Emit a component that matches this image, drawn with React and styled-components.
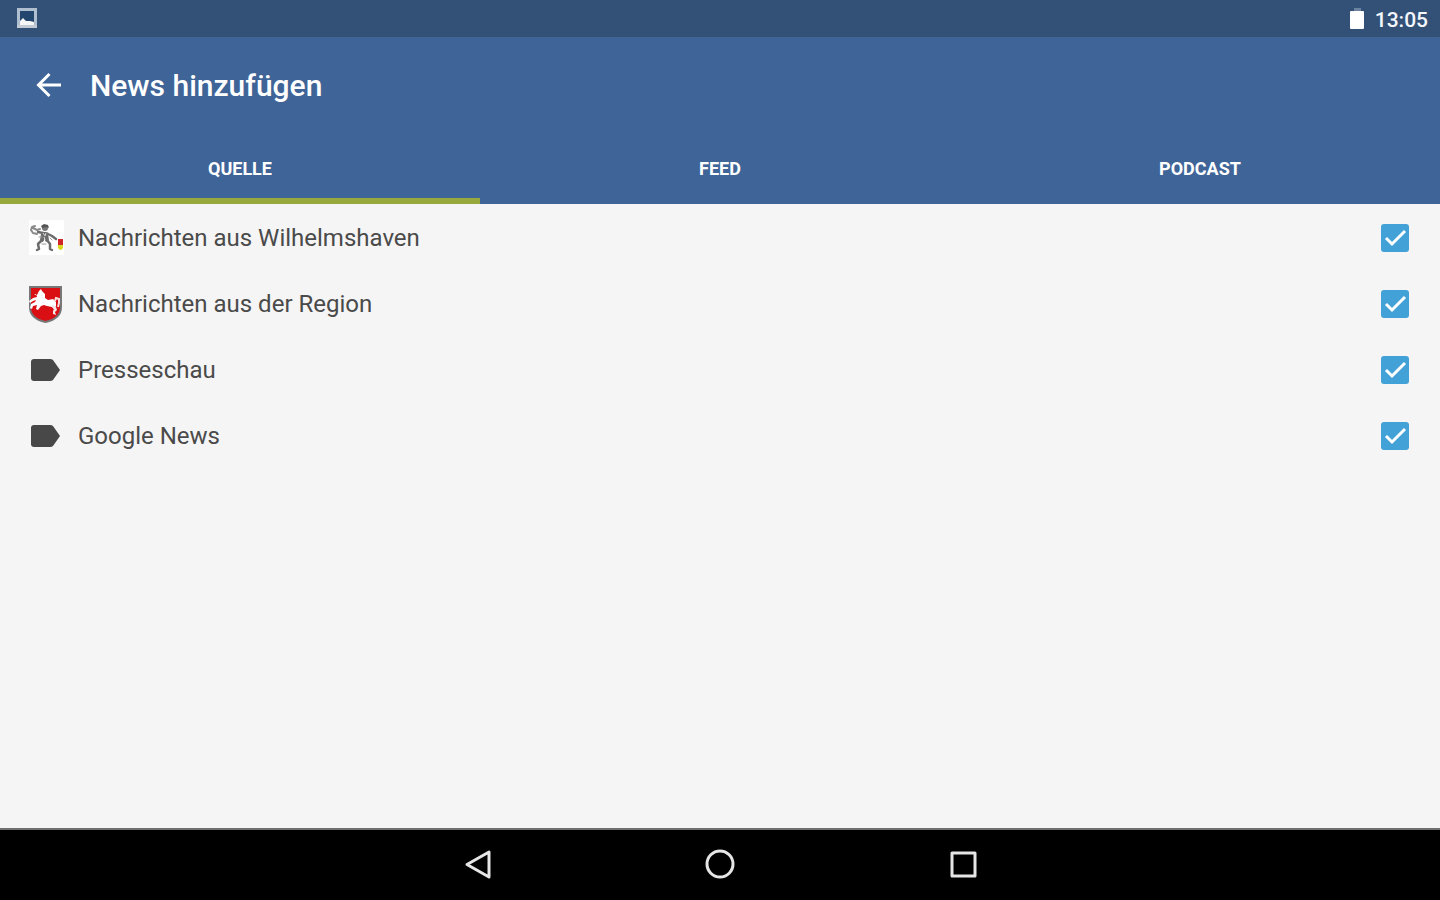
import React, { useState } from "react";
import styled, { createGlobalStyle } from "styled-components";

const GlobalStyle = createGlobalStyle`
  *, *::before, *::after { box-sizing: border-box; }
  body {
    margin: 0;
    background: #f5f5f5;
    color: #4a4a4a;
    font-family: Roboto, "Liberation Sans", sans-serif;
  }
  button, input { font: inherit; }
`;

const Screen = styled.div`
  display: flex;
  flex-direction: column;
  min-height: 100vh;
`;

const StatusBar = styled.div`
  display: flex;
  align-items: center;
  justify-content: space-between;
  height: 37px;
  padding: 0 12px 0 16px;
  background: #335076;
  color: #f4f7fb;
`;

const StatusGroup = styled.div`
  display: flex;
  align-items: center;
  gap: 10px;
`;

const Clock = styled.time`
  font-size: 21px;
  font-weight: 500;
  line-height: 24px;
  padding-top: 2px;
`;

const Header = styled.header`
  background: #3f6497;
  color: #fff;
`;

const Toolbar = styled.div`
  display: flex;
  align-items: center;
  gap: 24px;
  height: 97px;
  padding: 0 32px;
`;

const IconButton = styled.button`
  display: flex;
  align-items: center;
  justify-content: center;
  width: ${({ $width }) => $width}px;
  height: 48px;
  padding: 0;
  border: 0;
  background: none;
  color: inherit;
  cursor: pointer;
`;

const Title = styled.h1`
  margin: 0;
  font-size: 30px;
  font-weight: 500;
  line-height: 36px;
`;

const Tabs = styled.div`
  display: grid;
  grid-template-columns: repeat(3, 1fr);
`;

const Tab = styled.button`
  height: 70px;
  padding: 6px 0 0;
  border: 0;
  border-bottom: 6px solid ${({ $active }) => ($active ? "#97a83c" : "transparent")};
  background: none;
  color: #fff;
  font-size: 18px;
  font-weight: 700;
  line-height: 24px;
  cursor: pointer;
`;

const Content = styled.main`
  flex: 1;
  padding-top: 1px;
`;

const List = styled.ul`
  margin: 0;
  padding: 0;
  list-style: none;
`;

const Row = styled.label`
  display: flex;
  align-items: center;
  gap: 14px;
  height: 66px;
  padding: 0 31px 0 28px;
  cursor: pointer;
`;

const RowIcon = styled.span`
  display: flex;
  width: 36px;
`;

const RowText = styled.span`
  flex: 1;
  font-size: 24px;
  line-height: 32px;
`;

const CheckHolder = styled.span`
  display: grid;
  width: 28px;
  height: 28px;
  > * { grid-area: 1 / 1; }
  svg { pointer-events: none; z-index: 1; }
`;

const Checkbox = styled.input`
  appearance: none;
  width: 28px;
  height: 28px;
  margin: 0;
  border: 3px solid #8a8a8a;
  border-radius: 3px;
  cursor: pointer;
  &:checked {
    border-color: #42a1d6;
    background: #42a1d6;
  }
`;

const NavBar = styled.nav`
  display: flex;
  justify-content: center;
  align-items: center;
  height: 72px;
  border-top: 2px solid #6f7170;
  background: #000;
  color: #e6e6e6;
`;

function PictureIcon() {
  return (
    <svg width="22" height="22" viewBox="0 0 22 22" aria-hidden="true">
      <rect x="2.500" y="1.500" width="17" height="17" fill="#23466f" stroke="#b0bfd0" strokeWidth="3" />
      <path d="M4 17v-4l3-3 3 3h4l4 1v3z" fill="#f6f6f6" />
      <path d="M1 17h20v3H1z" fill="#c3cad3" />
    </svg>
  );
}

function BatteryIcon() {
  return (
    <svg width="16" height="22" viewBox="0 0 16 22" aria-hidden="true">
      <rect x="5" y="0" width="7" height="4" fill="#6c829e" />
      <rect x="1" y="3" width="14" height="18" rx="1" fill="#fff" />
    </svg>
  );
}

function BackArrow() {
  return (
    <svg width="28" height="28" viewBox="0 0 28 28" fill="none" stroke="currentColor" strokeWidth="3" aria-hidden="true">
      <path d="M26 13H4M14.500 2 3.500 13l11 11" />
    </svg>
  );
}

function WarriorCrest() {
  return (
    <svg width="36" height="36" viewBox="0 0 36 36" aria-hidden="true">
      <rect x="1" width="35" height="35" fill="#fff" />
      <g fill="none" stroke="#6c6c6c" strokeLinecap="round" strokeLinejoin="round">
        <path d="M7 6 4 7l-1 3 2 3 4 1M5 8l4 2 3-1" stroke="#8b8b8b" strokeWidth="2" />
        <path d="m10 12 5 1 5 1 4 2 4 3" strokeWidth="2.500" />
        <path d="m15 14-1 6M18 14l1 6" strokeWidth="4" />
        <path d="m13 21-3 3 1 5-2 1M19 20l3 4v5l2 1" strokeWidth="2.500" />
        <path d="M11 17h3M22 18l2 2M14 24h4" strokeWidth="1" stroke="#999" />
      </g>
      <circle cx="17" cy="8" r="3" fill="#777" />
      <path d="m13 6 3-2 4 1 1 3-3-1-4 1z" fill="#555" />
      <path d="m15 13 2 3 1-3M16 17l1 3" stroke="#d5d5d5" fill="none" />
      <path d="M30 19h5v6h-5z" fill="#d22328" />
      <path d="M30 25h5v3q-1 2-2.500 2T30 28z" fill="#d9d922" />
    </svg>
  );
}

function HorseCrest() {
  return (
    <svg width="36" height="38" viewBox="0 0 36 38" aria-hidden="true">
      <path d="M2 2h31v20c0 9-6 13-15.500 15C8 35 2 31 2 22z" fill="#d90f14" stroke="#777" strokeWidth="2" />
      <path
        d="M9 10 11 6l2-2 1 2 3 3v4l3 2 5-1 3 3v4l-2 3-2-2-5-1-3-1-3 1-3 4-2-1 1-4-4 1-1 3-2-1 1-4 4-2 1-2-3 1-3 2-1-2 4-3 4-1-1-3-2 1z"
        fill="#fff"
      />
      <path d="m25 20 3 2 1 3-2 2 1 3-3-1v-3l1-2-3-3z" fill="#f3e8e8" />
      <path d="m27 16 1-3 3 1v4l-1 4" fill="none" stroke="#f6dede" strokeWidth="2" />
    </svg>
  );
}

function LabelIcon() {
  return (
    <svg width="36" height="24" viewBox="0 0 36 24" aria-hidden="true">
      <path d="M6 1h16q2 0 3 1l7 10-7 10q-1 1-3 1H6q-3 0-3-3V4q0-3 3-3z" fill="#484848" />
    </svg>
  );
}

function CheckMark() {
  return (
    <svg width="28" height="28" viewBox="0 0 28 28" fill="none" stroke="#fff" strokeWidth="3" aria-hidden="true">
      <path d="m5 14 6 6L24 7" />
    </svg>
  );
}

function NavIcon({ children }) {
  return (
    <svg width="32" height="32" viewBox="0 0 32 32" fill="none" stroke="currentColor" strokeWidth="3" strokeLinejoin="round" aria-hidden="true">
      {children}
    </svg>
  );
}

const TABS = ["QUELLE", "FEED", "PODCAST"];

const SOURCES = [
  { name: "Nachrichten aus Wilhelmshaven", Icon: WarriorCrest },
  { name: "Nachrichten aus der Region", Icon: HorseCrest },
  { name: "Presseschau", Icon: LabelIcon },
  { name: "Google News", Icon: LabelIcon },
];

function SourceRow({ name, Icon }) {
  const [checked, setChecked] = useState(true);
  return (
    <li>
      <Row>
        <RowIcon><Icon /></RowIcon>
        <RowText>{name}</RowText>
        <CheckHolder>
          <Checkbox type="checkbox" checked={checked} onChange={(e) => setChecked(e.target.checked)} />
          {checked && <CheckMark />}
        </CheckHolder>
      </Row>
    </li>
  );
}

export default function App() {
  const [active, setActive] = useState("QUELLE");
  return (
    <Screen>
      <GlobalStyle />
      <StatusBar>
        <PictureIcon />
        <StatusGroup>
          <BatteryIcon />
          <Clock>13:05</Clock>
        </StatusGroup>
      </StatusBar>
      <Header>
        <Toolbar>
          <IconButton $width={34} aria-label="Zurück"><BackArrow /></IconButton>
          <Title>News hinzufügen</Title>
        </Toolbar>
        <Tabs role="tablist">
          {TABS.map((tab) => (
            <Tab key={tab} role="tab" aria-selected={tab === active} $active={tab === active} onClick={() => setActive(tab)}>
              {tab}
            </Tab>
          ))}
        </Tabs>
      </Header>
      <Content>
        <List>
          {SOURCES.map((source) => <SourceRow key={source.name} {...source} />)}
        </List>
      </Content>
      <NavBar>
        <IconButton $width={243} aria-label="Zurück">
          <NavIcon><path d="M28 3v25L6 15.500z" /></NavIcon>
        </IconButton>
        <IconButton $width={243} aria-label="Startseite">
          <NavIcon><circle cx="16" cy="15" r="13" /></NavIcon>
        </IconButton>
        <IconButton $width={243} aria-label="Übersicht">
          <NavIcon><path d="M5 4h23v23H5z" /></NavIcon>
        </IconButton>
      </NavBar>
    </Screen>
  );
}
